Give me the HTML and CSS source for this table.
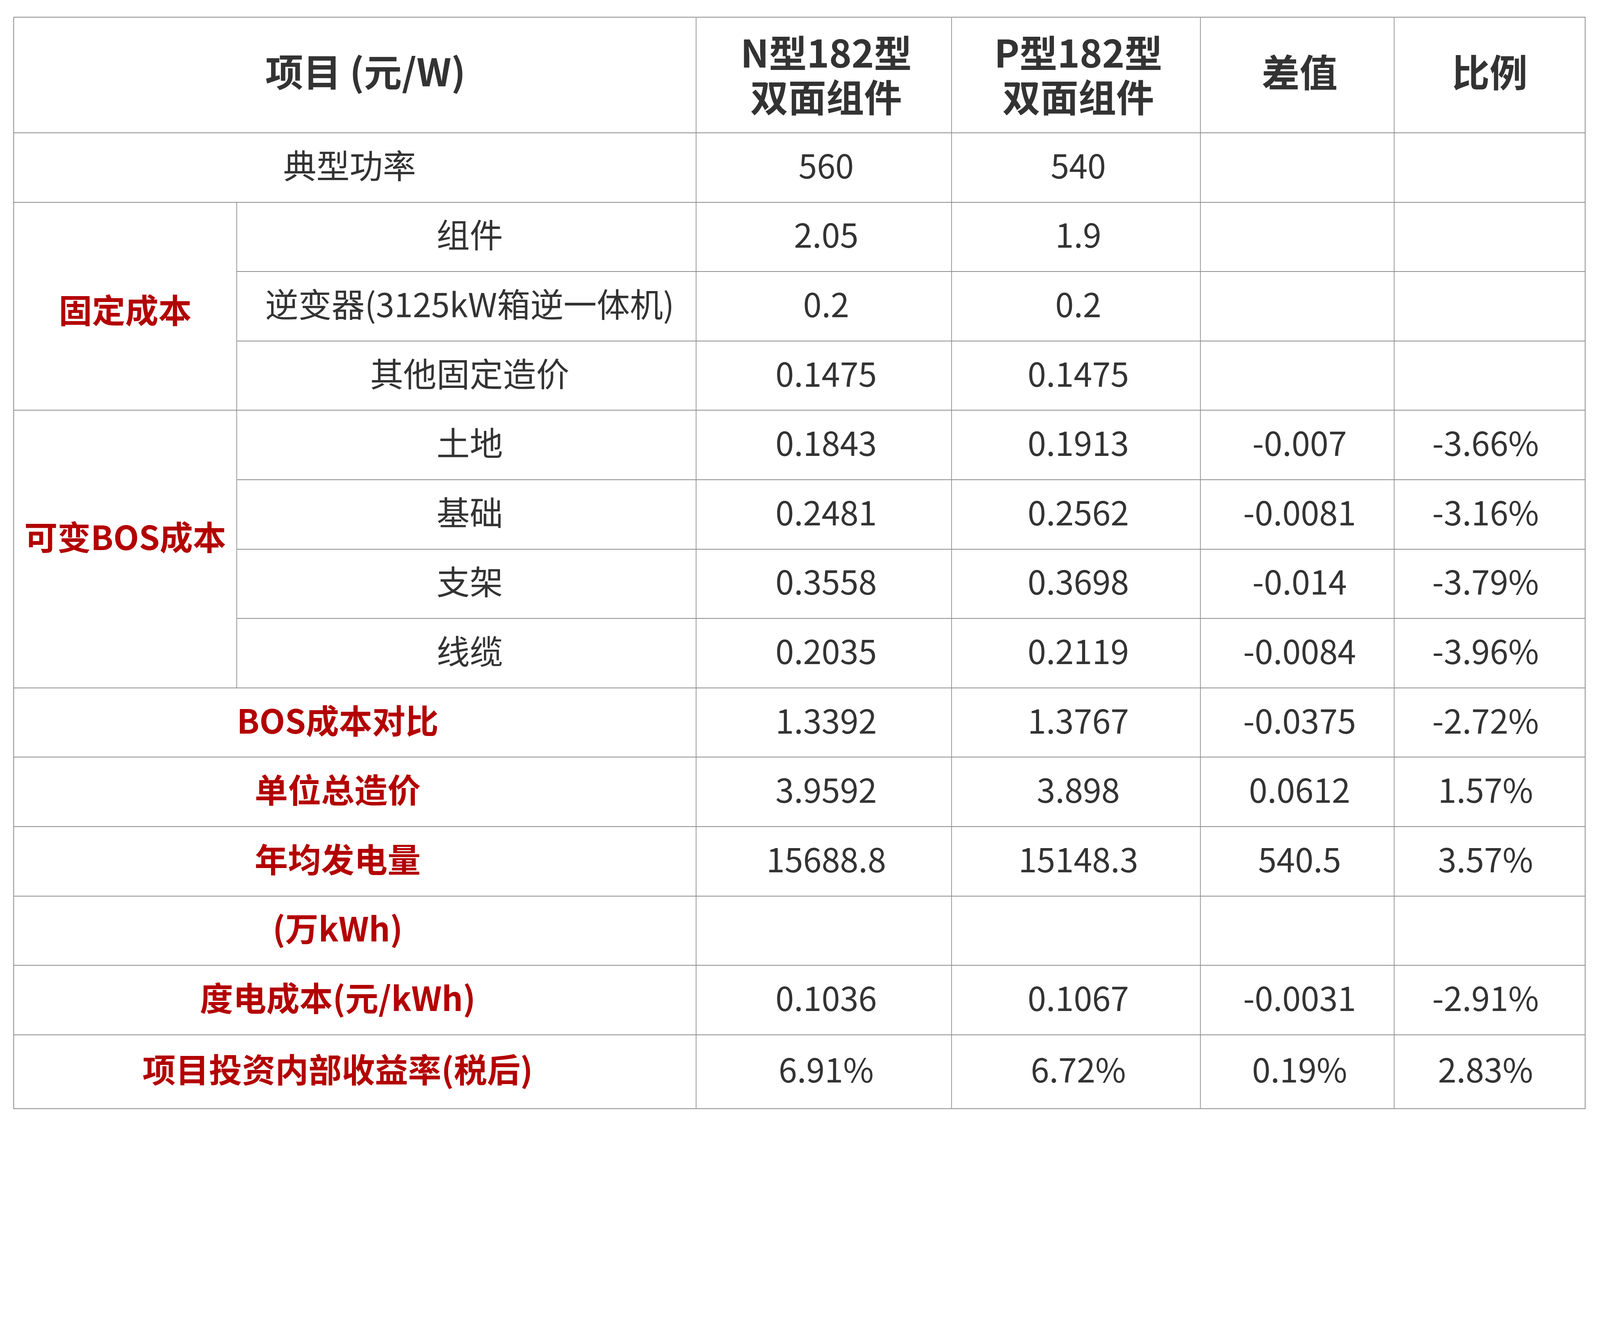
FILE: index.html
```html
<!DOCTYPE html>
<html lang="zh-CN">
<head>
<meta charset="utf-8">
<title>N型与P型组件成本对比</title>
<link rel="stylesheet" href="styles.css">
</head>
<body>
<table class="cost-table">
  <colgroup>
    <col class="c1"><col class="c2"><col class="c3"><col class="c4"><col class="c5"><col class="c6">
  </colgroup>
  <thead>
    <tr class="head-row">
      <th colspan="2" class="h-item">项目 (元/W)</th>
      <th class="h-two">N型182型<br>双面组件</th>
      <th class="h-two">P型182型<br>双面组件</th>
      <th>差值</th>
      <th class="last">比例</th>
    </tr>
  </thead>
  <tbody>
    <tr>
      <td colspan="2" class="merged black">典型功率</td>
      <td>560</td><td>540</td><td></td><td class="last"></td>
    </tr>
    <tr>
      <td rowspan="3" class="group g-fixed">固定成本</td>
      <td class="sub">组件</td>
      <td>2.05</td><td>1.9</td><td></td><td class="last"></td>
    </tr>
    <tr>
      <td class="sub">逆变器(3125kW箱逆一体机)</td>
      <td>0.2</td><td>0.2</td><td></td><td class="last"></td>
    </tr>
    <tr>
      <td class="sub">其他固定造价</td>
      <td>0.1475</td><td>0.1475</td><td></td><td class="last"></td>
    </tr>
    <tr>
      <td rowspan="4" class="group g-var">可变BOS成本</td>
      <td class="sub">土地</td>
      <td>0.1843</td><td>0.1913</td><td>-0.007</td><td class="last">-3.66%</td>
    </tr>
    <tr>
      <td class="sub">基础</td>
      <td>0.2481</td><td>0.2562</td><td>-0.0081</td><td class="last">-3.16%</td>
    </tr>
    <tr>
      <td class="sub">支架</td>
      <td>0.3558</td><td>0.3698</td><td>-0.014</td><td class="last">-3.79%</td>
    </tr>
    <tr>
      <td class="sub">线缆</td>
      <td>0.2035</td><td>0.2119</td><td>-0.0084</td><td class="last">-3.96%</td>
    </tr>
    <tr>
      <td colspan="2" class="merged red">BOS成本对比</td>
      <td>1.3392</td><td>1.3767</td><td>-0.0375</td><td class="last">-2.72%</td>
    </tr>
    <tr>
      <td colspan="2" class="merged red">单位总造价</td>
      <td>3.9592</td><td>3.898</td><td>0.0612</td><td class="last">1.57%</td>
    </tr>
    <tr>
      <td colspan="2" class="merged red">年均发电量</td>
      <td>15688.8</td><td>15148.3</td><td>540.5</td><td class="last">3.57%</td>
    </tr>
    <tr>
      <td colspan="2" class="merged red">(万kWh)</td>
      <td></td><td></td><td></td><td class="last"></td>
    </tr>
    <tr>
      <td colspan="2" class="merged red">度电成本(元/kWh)</td>
      <td>0.1036</td><td>0.1067</td><td>-0.0031</td><td class="last">-2.91%</td>
    </tr>
    <tr class="final-row">
      <td colspan="2" class="merged red">项目投资内部收益率(税后)</td>
      <td>6.91%</td><td>6.72%</td><td>0.19%</td><td class="last">2.83%</td>
    </tr>
  </tbody>
</table>
</body>
</html>
```

FILE: styles.css
```css
html, body {
  margin: 0;
  padding: 0;
  background: #ffffff;
}

body {
  font-family: "Noto Sans CJK SC", "Noto Sans", sans-serif;
  color: #333333;
}

.cost-table {
  margin: 43px 0 0 34px;
  width: 4023px;
  border-collapse: collapse;
  table-layout: fixed;
}

.c1 { width: 571px; }
.c2 { width: 1176px; }
.c3 { width: 654px; }
.c4 { width: 637px; }
.c5 { width: 496px; }
.c6 { width: 489px; }

.cost-table th,
.cost-table td {
  border-top: 2.5px solid #8d8d8d;
  border-bottom: 2.5px solid #8d8d8d;
  border-left: 2px solid #9a9a9a;
  border-right: 2px solid #9a9a9a;
  text-align: center;
  vertical-align: middle;
  font-size: 85px;
  line-height: 1.2;
  white-space: nowrap;
}

.cost-table td {
  padding: 0 0 18px 12px;
}

.cost-table th {
  font-weight: 700;
  font-size: 97px;
  line-height: 113px;
  padding: 0 0 26px 12px;
}

.cost-table th.h-two {
  padding-bottom: 10px;
}

.cost-table td.sub {
  padding-left: 17px;
}

.cost-table .last {
  border-right: 2.5px solid #8d8d8d;
}

.cost-table th.last {
  padding-left: 0;
}

.cost-table td.last {
  padding-left: 0;
  padding-right: 21px;
}

.head-row {
  height: 296px;
}

.cost-table tbody tr {
  height: 177.6px;
}

.cost-table tbody tr.final-row {
  height: 189px;
}

.cost-table .h-item {
  padding: 0 0 28px 54px;
  border-left: 2.5px solid #8d8d8d;
}

.cost-table .merged {
  border-left: 2.5px solid #8d8d8d;
}

.cost-table .merged.black {
  padding: 0 27px 18px 0;
}

.cost-table .merged.red {
  padding: 0 88px 18px 0;
}

.red,
.group {
  color: #b30000;
  font-weight: 700;
}

.cost-table .group {
  border-left: 2.5px solid #8d8d8d;
  padding: 0;
}

.cost-table .g-fixed {
  padding-top: 13px;
}

.cost-table .g-var {
  padding-bottom: 69px;
}
```
